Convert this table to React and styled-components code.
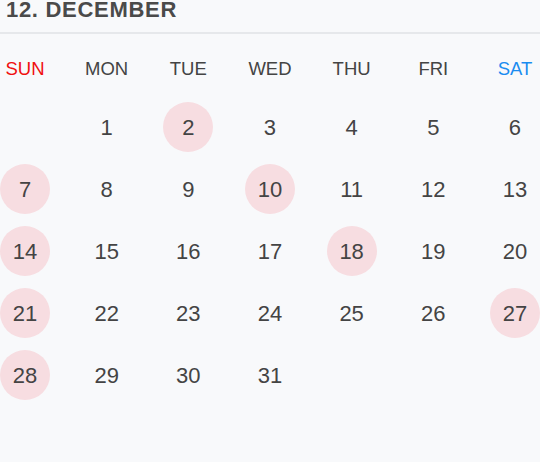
import React from "react";
import styled, { createGlobalStyle } from "styled-components";

const Global = createGlobalStyle`
  html, body { margin: 0; padding: 0; background: #f8f9fb; }
  body { font-family: "Liberation Sans", Arial, sans-serif; }
`;

const Page = styled.div`
  width: 540px;
  height: 462px;
  background: #f8f9fb;
  overflow: hidden;
`;

const Title = styled.h1`
  margin: 0;
  padding: 0 0 12px 6px;
  font-size: 22px;
  line-height: 20px;
  font-weight: 700;
  letter-spacing: 0.7px;
  color: #4a4a4a;
  border-bottom: 2px solid #e6e8eb;
`;

const Row = styled.div`
  display: flex;
  justify-content: space-between;
  align-items: center;
  height: ${(p) => p.$h}px;
`;

const Week = styled(Row)`
  margin-top: 20px;
  margin-bottom: 18px;
`;

const Grid = styled.div`
  display: flex;
  flex-direction: column;
  gap: 12px;
`;

const WeekDay = styled.div`
  width: 50px;
  text-align: center;
  font-size: 18.5px;
  color: ${(p) => p.$c || "#444"};
`;

const Day = styled.div`
  width: 50px;
  height: 50px;
  border-radius: 50%;
  display: flex;
  align-items: center;
  justify-content: center;
  font-size: 22px;
  padding-top: 1px;
  box-sizing: border-box;
  color: #444;
  background: ${(p) => (p.$marked ? "#f7dde1" : "transparent")};
`;

const names = [
  ["SUN", "#f01010"],
  ["MON"],
  ["TUE"],
  ["WED"],
  ["THU"],
  ["FRI"],
  ["SAT", "#1a8cf0"],
];
const marked = new Set([2, 7, 10, 14, 18, 21, 27, 28]);

export default function App() {
  const cells = [null];
  for (let d = 1; d <= 31; d++) cells.push(d);
  while (cells.length % 7) cells.push(null);
  const weeks = [];
  for (let i = 0; i < cells.length; i += 7) weeks.push(cells.slice(i, i + 7));
  return (
    <Page>
      <Global />
      <Title>12. DECEMBER</Title>
      <Week $h={30}>
        {names.map(([n, c]) => (
          <WeekDay key={n} $c={c}>
            {n}
          </WeekDay>
        ))}
      </Week>
      <Grid>
        {weeks.map((w, i) => (
          <Row key={i} $h={50}>
            {w.map((d, j) => (
              <Day key={j} $marked={marked.has(d)}>
                {d}
              </Day>
            ))}
          </Row>
        ))}
      </Grid>
    </Page>
  );
}
